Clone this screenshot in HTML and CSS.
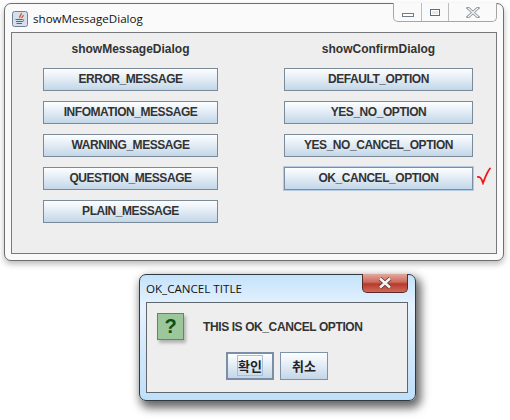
FILE: index.html
```html
<!DOCTYPE html>
<html lang="en">
<head>
    <meta charset="UTF-8">
    <title>showMessageDialog</title>
    <link rel="stylesheet" href="styles.css">
</head>
<body>
    <div class="window main-window">
        <div class="titlebar">
            <svg class="java-icon" width="16" height="16" viewBox="0 0 16 16">
                <rect x="0.5" y="0.5" width="15" height="15" rx="2" fill="#d5e0ec" stroke="#6f8296"/>
                <path d="M9 2c1.500 1.500-2.500 3-1 5M11 4c1 1.500-2 2-.8 3" fill="none" stroke="#d9531e" stroke-width="1.300"/>
                <path d="M3.500 8.500h7M4 10.500h6.500M4.500 12.500h5.500" fill="none" stroke="#44698f" stroke-width="1.100"/>
                <path d="M10.500 8.500c1.500 0 1.500 1.800 0 2" fill="none" stroke="#44698f"/>
            </svg>
            <span class="title-text">showMessageDialog</span>
            <div class="caption-btns">
                <div class="caption-btn min-btn"><span class="min-glyph"></span></div>
                <div class="caption-btn max-btn"><span class="max-glyph"></span></div>
                <div class="caption-btn close-btn">
                    <svg width="14" height="11" viewBox="0 0 14 11">
                        <path d="M2 1l10 9M12 1L2 10" stroke="#8d9298" stroke-width="3" stroke-linecap="square"/>
                        <path d="M2 1l10 9M12 1L2 10" stroke="#f4f5f6" stroke-width="1.300"/>
                    </svg>
                </div>
            </div>
        </div>
        <div class="panel">
            <div class="col col-left">
                <div class="col-title">showMessageDialog</div>
                <div class="btn">ERROR_MESSAGE</div>
                <div class="btn">INFOMATION_MESSAGE</div>
                <div class="btn">WARNING_MESSAGE</div>
                <div class="btn">QUESTION_MESSAGE</div>
                <div class="btn">PLAIN_MESSAGE</div>
            </div>
            <div class="col col-right">
                <div class="col-title">showConfirmDialog</div>
                <div class="btn">DEFAULT_OPTION</div>
                <div class="btn">YES_NO_OPTION</div>
                <div class="btn">YES_NO_CANCEL_OPTION</div>
                <div class="btn btn-active">
                    OK_CANCEL_OPTION
                    <svg class="check-mark" width="16" height="18" viewBox="0 0 16 18">
                        <path d="M1 10c1.500-.5 3.500 1.500 5 6C8 11 10 5 13 1.500" fill="none" stroke="#f01818" stroke-width="1.900" stroke-linecap="round"/>
                    </svg>
                </div>
            </div>
        </div>
    </div>

    <div class="window dialog">
        <div class="dialog-title">
            <span class="title-text">OK_CANCEL TITLE</span>
            <div class="dialog-close">
                <svg width="16" height="12" viewBox="0 0 16 12">
                    <path d="M3 1.500l10 9M13 1.500l-10 9" stroke="#5c3a38" stroke-width="4"/>
                    <path d="M3 1.500l10 9M13 1.500l-10 9" stroke="#f5f5f5" stroke-width="2.400"/>
                </svg>
            </div>
        </div>
        <div class="dialog-panel">
            <div class="dialog-msg">
                <div class="question-icon">?</div>
                <span class="msg-text">THIS IS OK_CANCEL OPTION</span>
            </div>
            <div class="dialog-btns">
                <div class="btn btn-ko btn-default"><span class="focus-ring">확인</span></div>
                <div class="btn btn-ko">취소</div>
            </div>
        </div>
    </div>
</body>
</html>
```

FILE: styles.css
```css
html, body { margin: 0; height: 100%; }
body { position: relative; width: 510px; height: 420px; overflow: hidden; background: #fff; font-family: "Liberation Sans", Arial, sans-serif; color: #333; }

.window { position: absolute; box-sizing: border-box; }
.title-text { font-family: "Open Sans", "Noto Sans", sans-serif; font-size: 11.6px; color: #111; }

/* main frame */
.main-window { left: 4px; top: 3px; width: 500px; height: 258px; padding: 0 6px 6px; background: #fafafa; border: 1px solid #6e6e6e; border-radius: 7px; box-shadow: 0 3px 6px rgba(0,0,0,0.28); }
.titlebar { display: flex; align-items: center; height: 28px; position: relative; }
.java-icon { margin-left: 1px; margin-right: 5px; margin-top: 1px; }
.caption-btns { position: absolute; right: 0; top: -1px; display: flex; height: 19px; box-sizing: border-box; border: 1px solid #a5a5a5; border-top: none; border-radius: 0 0 5px 5px; background: #fafafa; }
.caption-btn { display: flex; align-items: center; justify-content: center; box-sizing: border-box; height: 100%; border-right: 1px solid #bcbcbc; }
.min-btn { width: 28px; }
.max-btn { width: 27px; }
.close-btn { width: 47px; border-right: none; }
.min-glyph { width: 10px; height: 2px; margin-top: 5px; border: 1px solid #6f7c8a; background: #fff; }
.max-glyph { width: 8px; height: 5px; border: 1px solid #5f6c7a; background: #e4e9ee; box-shadow: inset 0 0 0 1px #fff; }

.panel { display: flex; gap: 66px; height: 222px; box-sizing: border-box; padding-left: 31px; background: #eeeeee; border: 1px solid #77797c; }
.col { display: flex; flex-direction: column; gap: 10px; }
.col-left { width: 175px; }
.col-right { width: 189px; }
.col-title { height: 25px; line-height: 33px; text-align: center; font-size: 12px; font-weight: bold; }

.btn { position: relative; display: flex; align-items: center; justify-content: center; box-sizing: border-box; height: 23px; padding-bottom: 2px; font-size: 12px; letter-spacing: -0.45px; font-weight: bold; color: #333; border: 1px solid #7a8a99; background: linear-gradient(#fdfeff 0%, #e6eff7 40%, #c3d6e8 100%); }
.btn-active { border-color: #7a8ea5; outline: 1px solid #b4cbe2; }
.check-mark { position: absolute; left: 192px; top: -1px; }

/* confirm dialog */
.dialog { left: 139px; top: 274px; width: 277px; height: 127px; padding: 0 7px 7px 6px; background: linear-gradient(#c4e2fb, #e6f3fe 25%, #d2e8fb 60%, #bfdff9); border: 1px solid #2f3a42; border-radius: 7px; box-shadow: 3px 5px 10px 2px rgba(0,0,0,0.6); }
.dialog-title { position: relative; display: flex; align-items: center; height: 27px; }
.dialog-close { position: absolute; right: 0; top: -1px; display: flex; align-items: center; justify-content: center; width: 46px; height: 19px; box-sizing: border-box; border: 1px solid #5b2a28; border-top: none; border-radius: 0 0 5px 5px; background: linear-gradient(#e3a79c, #cc6a5c 45%, #b73a2c 55%, #cf6a58); }
.dialog-panel { display: flex; flex-direction: column; height: 91px; box-sizing: border-box; background: #eeeeee; border: 1px solid #5f666c; }
.dialog-msg { display: flex; align-items: center; gap: 19px; padding: 10px 0 0 10px; }
.question-icon { display: flex; align-items: center; justify-content: center; box-sizing: border-box; width: 27px; height: 27px; font-size: 20px; font-weight: bold; color: #0f4f12; background: #9cc79a; border: 1px solid #5c8a60; box-shadow: 2px 3px 3px rgba(0,0,0,0.25); }
.msg-text { font-size: 12px; letter-spacing: -0.4px; font-weight: bold; }
.dialog-btns { display: flex; justify-content: center; gap: 6px; margin-top: 12px; }
.btn-ko { width: 48px; height: 28px; padding-bottom: 2px; letter-spacing: 0; font-family: "Noto Sans CJK KR", sans-serif; font-size: 13px; color: #222; border-color: #7f93a8; }
.btn-default { border: 2px solid #7a8ea5; }
.focus-ring { padding: 1px 0; border: 1px solid #a9bfd6; line-height: 17px; }
```
